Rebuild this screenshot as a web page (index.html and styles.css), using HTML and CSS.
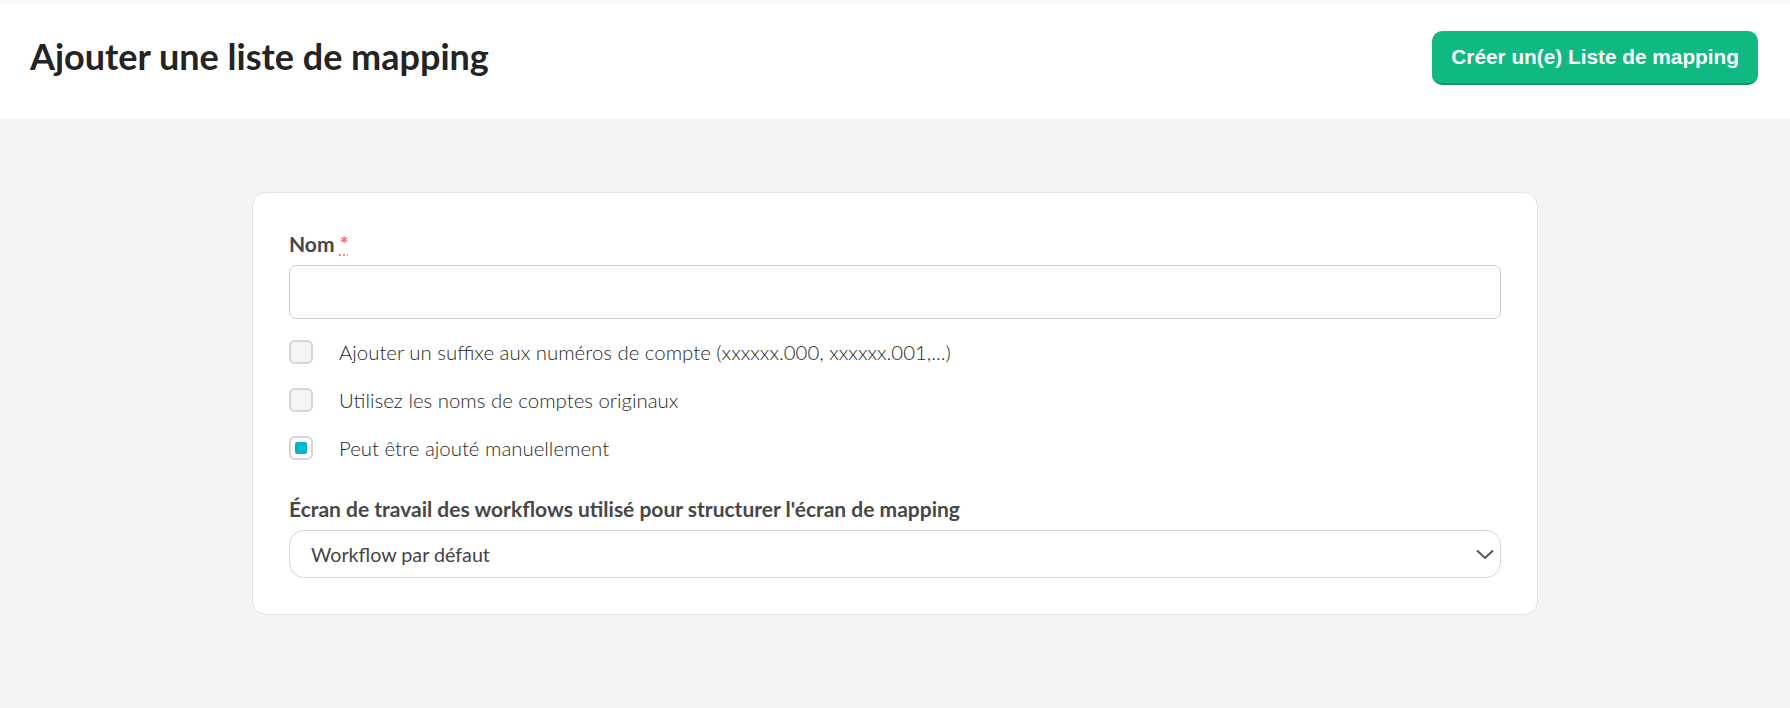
FILE: index.html
```html
<!DOCTYPE html>
<html lang="fr">
<head>
<meta charset="utf-8">
<title>Ajouter une liste de mapping</title>
<link rel="stylesheet" href="styles.css">
</head>
<body>
<header class="topbar">
  <h1 class="title">Ajouter une liste de mapping</h1>
  <button class="btn-primary" type="button">Créer un(e) Liste de mapping</button>
</header>
<main class="content">
  <section class="card">
    <label class="field-label" for="nom">Nom <abbr class="req" title="required">*</abbr></label>
    <input id="nom" class="text-input" type="text">
    <div class="checks">
      <label class="check-row"><span class="box"></span><span class="check-text">Ajouter un suffixe aux numéros de compte (xxxxxx.000, xxxxxx.001,...)</span></label>
      <label class="check-row"><span class="box"></span><span class="check-text">Utilisez les noms de comptes originaux</span></label>
      <label class="check-row"><span class="box checked"></span><span class="check-text">Peut être ajouté manuellement</span></label>
    </div>
    <div class="field-label second">Écran de travail des workflows utilisé pour structurer l'écran de mapping</div>
    <div class="select">
      <span class="select-value">Workflow par défaut</span>
      <svg class="chevron" width="18" height="11" viewBox="0 0 18 11"><polyline points="1,1.5 9,9 17,1.5" fill="none" stroke="#555" stroke-width="2"/></svg>
    </div>
  </section>
</main>
</body>
</html>
```
FILE: styles.css
```css
* { box-sizing: border-box; }
html, body { margin: 0; padding: 0; }
body {
  background: #f4f4f4;
  font-family: "Lato", "Open Sans", sans-serif;
  color: #333;
  width: 1790px;
  height: 708px;
  overflow: hidden;
}
.topbar {
  background: #fff;
  border-top: 4px solid #f7f7f7;
  height: 119px;
  display: flex;
  justify-content: space-between;
  align-items: flex-start;
  padding: 27px 32px 0 30px;
}
.title {
  margin: 3px 0 0 0;
  font-size: 36px;
  line-height: 44px;
  font-weight: 700;
  color: #242424;
}
.btn-primary {
  height: 54px;
  padding: 0 19px;
  border: none;
  border-bottom: 2px solid #0b9868;
  border-radius: 10px;
  background: #10b981;
  color: #fff;
  font-family: "Liberation Sans", Arial, sans-serif;
  font-weight: 700;
  font-size: 20.8px;
  display: flex;
  align-items: center;
  cursor: pointer;
}
.content {
  padding-top: 73px;
}
.card {
  width: 1286px;
  margin: 0 auto;
  background: #fff;
  border: 1px solid #e3e3e3;
  border-radius: 14px;
  padding: 36px;
  display: flex;
  flex-direction: column;
}
.field-label {
  font-size: 21px;
  line-height: 30px;
  font-weight: 700;
  color: #474747;
  margin-bottom: 6px;
}
.field-label.second { margin-top: 32px; }
.req {
  color: #f26b6b;
  text-decoration: underline dotted #e88;
  font-weight: 700;
}
.text-input {
  height: 54px;
  width: 100%;
  border: 1px solid #cbcbcb;
  border-radius: 7px;
  background: #fff;
  font: inherit;
  outline: none;
}
.checks {
  margin-top: 19px;
  display: flex;
  flex-direction: column;
  gap: 20px;
}
.check-row {
  display: flex;
  align-items: center;
  height: 28px;
  gap: 26px;
}
.box {
  width: 24px;
  height: 24px;
  border: 2px solid #d6d6d6;
  border-radius: 6px;
  background: #f5f5f5;
  flex: none;
  display: flex;
  align-items: center;
  justify-content: center;
}
.box.checked { background: #fff; }
.box.checked::after {
  content: "";
  width: 12px;
  height: 12px;
  border-radius: 2px;
  background: #00b5d8;
}
.check-text {
  font-size: 20.4px;
  font-weight: 300;
  color: #2a2a2a;
}
.select {
  height: 48px;
  border: 1px solid #d6d6d6;
  border-radius: 15px;
  display: flex;
  align-items: center;
  justify-content: space-between;
  padding: 0 6px 0 21px;
}
.select-value {
  font-size: 19.7px;
  color: #444;
}
.chevron { display: block; }
```
